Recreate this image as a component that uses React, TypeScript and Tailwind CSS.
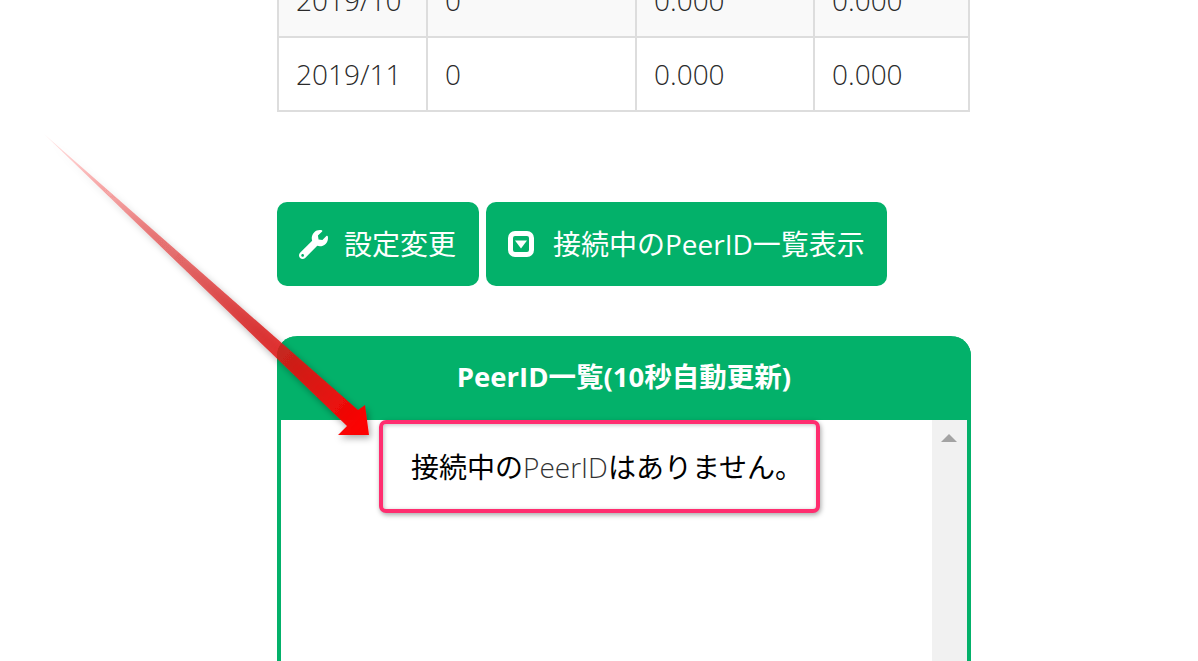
import React from "react";
import { FaWrench } from "react-icons/fa";

const cell = "border-2 border-[#dddddd] px-[17px] align-middle text-left font-light text-[#2a2a2a]";

function Row({ vals, striped }: { vals: string[]; striped?: boolean }) {
  return (
    <tr className={`h-[74px] ${striped ? "bg-[#f9f9f9]" : "bg-white"}`}>
      {vals.map((v, i) => (
        <td key={i} className={cell}>{v}</td>
      ))}
    </tr>
  );
}

export default function App() {
  return (
    <div className="relative h-[661px] w-[1198px] overflow-hidden bg-white text-[28px] text-[#333] [font-family:'Open_Sans','Noto_Sans_CJK_JP',sans-serif]">
      <div className="ml-[277px] w-[694px]">
        <table className="-mt-[38px] w-[691px] table-fixed border-collapse">
          <colgroup>
            <col className="w-[149px]" />
            <col className="w-[209px]" />
            <col className="w-[178px]" />
            <col className="w-[155px]" />
          </colgroup>
          <tbody>
            <Row striped vals={["2019/10", "0", "0.000", "0.000"]} />
            <Row vals={["2019/11", "0", "0.000", "0.000"]} />
          </tbody>
        </table>

        <div className="mt-[90px] flex gap-[7px] text-white">
          <button className="flex h-[84px] w-[202px] items-center rounded-[10px] bg-[#03b16a] pl-[22px]">
            <FaWrench className="mr-[16px] h-[29px] w-[29px]" />
            <span>設定変更</span>
          </button>
          <button className="flex h-[84px] w-[401px] items-center rounded-[10px] bg-[#03b16a] pl-[22px]">
            <svg className="mr-[19px] h-[26px] w-[26px]" viewBox="0 0 26 26">
              <rect x="2.5" y="2.5" width="21" height="21" rx="4.5" fill="none" stroke="#fff" strokeWidth="5" />
              <polygon points="7,9.5 19,9.5 13,17.5" fill="#fff" />
            </svg>
            <span>接続中のPeerID一覧表示</span>
          </button>
        </div>

        <div className="relative mt-[50px] h-[400px] rounded-t-[20px] border-x-4 border-[#03b16a]">
          <div className="-mx-1 flex h-[84px] items-center justify-center rounded-t-[20px] bg-[#03b16a] pb-[3px] text-[27.5px] font-bold text-white">
            PeerID一覧(10秒自動更新)
          </div>
          <div className="flex h-[316px]">
            <div className="flex-1" />
            <div className="flex w-[35px] justify-center bg-[#f1f1f1] pr-[1px] pt-[14px]">
              <div className="h-0 w-0 border-x-[8px] border-b-[8px] border-x-transparent border-b-[#a3a3a3]" />
            </div>
          </div>
        </div>
      </div>

      <div className="absolute left-[379px] top-[420px] flex h-[93px] w-[441px] items-center rounded-[7px] border-4 border-[#ff2d6f] bg-white pl-[28px] text-black shadow-[1px_2px_5px_rgba(0,0,0,0.35),inset_1px_1px_4px_rgba(0,0,0,0.25)]">
        <span>接続中の</span>
        <span className="font-light text-[#333]">PeerID</span>
        <span>はありません。</span>
      </div>

      <svg className="absolute left-0 top-0" width="1198" height="661" viewBox="0 0 1198 661">
        <defs>
          <linearGradient id="arrowFill" gradientUnits="userSpaceOnUse" x1="47" y1="137" x2="369" y2="435">
            <stop offset="0" stopColor="#ff0000" stopOpacity="0.1" />
            <stop offset="0.3" stopColor="#e01a1a" stopOpacity="0.5" />
            <stop offset="0.65" stopColor="#d81a1a" stopOpacity="0.82" />
            <stop offset="1" stopColor="#ff0000" stopOpacity="1" />
          </linearGradient>
          <filter id="arrowShadow" x="-10%" y="-10%" width="120%" height="120%">
            <feDropShadow dx="2" dy="3" stdDeviation="3.5" floodColor="#000" floodOpacity="0.35" />
          </filter>
        </defs>
        <polygon
          points="44,134 358,410 365,405 369,435 338,435 347,426"
          fill="url(#arrowFill)"
          filter="url(#arrowShadow)"
        />
      </svg>
    </div>
  );
}
